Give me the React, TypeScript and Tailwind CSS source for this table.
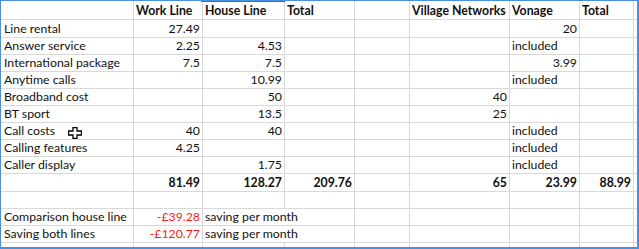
import React from 'react';

type Cell = {
  t?: string;
  right?: boolean;
  bold?: boolean;
  red?: boolean;
  span?: number;
};

const L = (t: string): Cell => ({ t });
const N = (t: string): Cell => ({ t, right: true });
const H = (t: string): Cell => ({ t, bold: true });
const B = (t: string): Cell => ({ t, right: true, bold: true });
const E: Cell = {};

// 9 columns: A..H plus the sliver of I at the right edge
const rows: Cell[][] = [
  [E, H('Work Line'), H('House Line'), H('Total'), E, H('Village Networks'), H('Vonage'), H('Total'), E],
  [L('Line rental'), N('27.49'), E, E, E, E, N('20'), E, E],
  [L('Answer service'), N('2.25'), N('4.53'), E, E, E, L('included'), E, E],
  [L('International package'), N('7.5'), N('7.5'), E, E, E, N('3.99'), E, E],
  [L('Anytime calls'), E, N('10.99'), E, E, E, L('included'), E, E],
  [L('Broadband cost'), E, N('50'), E, E, N('40'), E, E, E],
  [L('BT sport'), E, N('13.5'), E, E, N('25'), E, E, E],
  [L('Call costs'), N('40'), N('40'), E, E, E, L('included'), E, E],
  [L('Calling features'), N('4.25'), E, E, E, E, L('included'), E, E],
  [L('Caller display'), E, N('1.75'), E, E, E, L('included'), E, E],
  [E, B('81.49'), B('128.27'), B('209.76'), E, B('65'), B('23.99'), B('88.99'), E],
  [E, E, E, E, E, E, E, E, E],
  [L('Comparison house line'), { t: '-£39.28', right: true, red: true }, { t: 'saving per month', span: 2 }, E, E, E, E, E],
  [L('Saving both lines'), { t: '-£120.77', right: true, red: true }, { t: 'saving per month', span: 2 }, E, E, E, E, E],
  [E, E, E, E, E, E, E, E, E],
];

function SelectCursor() {
  return (
    <svg className="absolute left-[67px] top-[126px]" width="14" height="12" viewBox="0 0 14 12">
      <path
        d="M5 0.5h4v3.5h4.5v4h-4.5v3.5h-4v-3.5h-4.5v-4h4.5z"
        fill="#fff"
        stroke="#000"
        strokeWidth="1.3"
      />
    </svg>
  );
}

export default function App() {
  return (
    <div className="relative w-[639px] h-[249px] bg-white border-l border-t border-r-2 border-b-2 border-[#4a90e2] overflow-hidden font-['Lato','Liberation_Sans',sans-serif] text-[12.3px] text-[#111]">
      {/* selected column marker on the frame */}
      <div className="absolute left-[200px] top-[-1px] w-[84px] h-[2px] bg-[#2a8a5a]" />
      <div className="grid grid-cols-[133px_69px_82px_70px_55px_100px_70px_54px_1fr] grid-rows-[19px_18px_17px_17px_17px_17px_17px_17px_17px_17px_18px_17px_17px_17px_4px]">
        {rows.map((row, ri) =>
          row.map((c, ci) => {
            const last = ri === rows.length - 1;
            const lastCol = ci === 8 || (c.span && ci + c.span >= 9);
            return (
              <div
                key={`${ri}-${ci}`}
                className={[
                  'flex items-end overflow-visible whitespace-nowrap leading-[15px] pb-[1px] px-[2px] border-[#d9d9d9]',
                  c.span === 2 ? 'col-span-2' : '',
                  c.right ? 'justify-end' : 'justify-start',
                  c.bold ? 'font-bold' : '',
                  c.red ? 'text-[#ff1a1a]' : '',
                  last ? '' : 'border-b',
                  lastCol ? '' : 'border-r',
                  ci === 0 ? 'pl-[3px]' : '',
                ].join(' ')}
              >
                {c.t}
              </div>
            );
          })
        )}
      </div>
      <SelectCursor />
    </div>
  );
}
